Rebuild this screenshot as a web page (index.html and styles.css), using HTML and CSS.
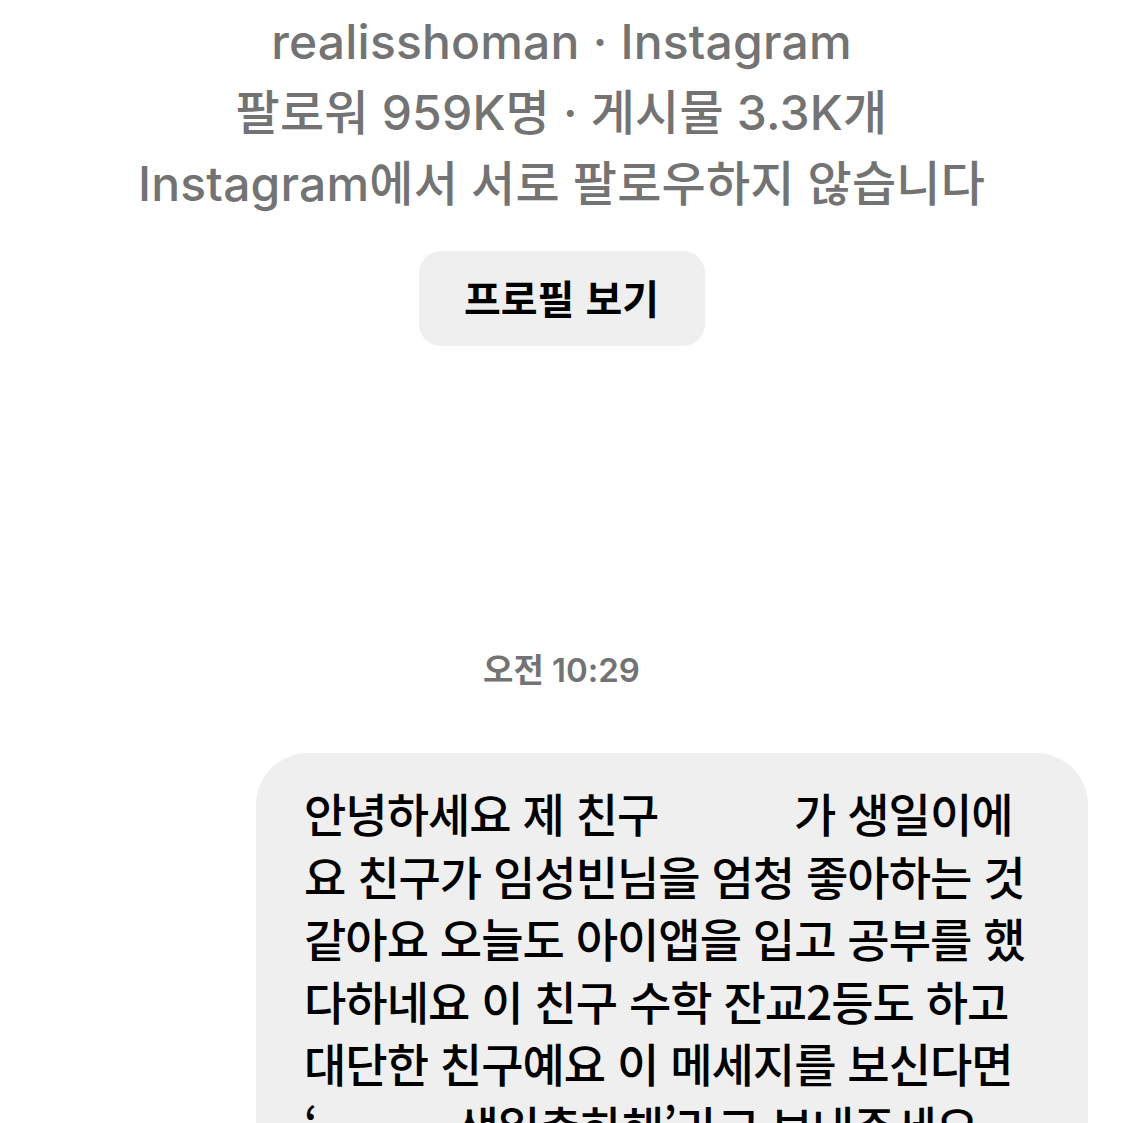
FILE: index.html
```html
<!DOCTYPE html>
<html lang="ko">
<head>
<meta charset="utf-8">
<title>Instagram DM</title>
<link rel="stylesheet" href="styles.css">
</head>
<body>
<main class="thread">
  <section class="profile">
    <p class="profile-line">realisshoman · Instagram</p>
    <p class="profile-line">팔로워 959K명 · 게시물 3.3K개</p>
    <p class="profile-line">Instagram에서 서로 팔로우하지 않습니다</p>
    <button class="profile-btn">프로필 보기</button>
  </section>
  <div class="timestamp">오전 10:29</div>
  <div class="msg-row">
    <div class="bubble">
      <p class="bubble-text">안녕하세요 제 친구 <span class="redact"></span> 가 생일이에<br>요 친구가 임성빈님을 엄청 좋아하는 것<br>같아요 오늘도 아이앱을 입고 공부를 했<br>다하네요 이 친구 수학 잔교2등도 하고<br>대단한 친구예요 이 메세지를 보신다면<br>‘<span class="redact short"></span>생일축하해’라고 보내주세요</p>
    </div>
  </div>
</main>
</body>
</html>
```
FILE: styles.css
```css
html, body {
  margin: 0;
  padding: 0;
  background: #ffffff;
  height: 100%;
  overflow: hidden;
}
body {
  font-family: "Inter", "Noto Sans CJK KR", sans-serif;
}
.thread {
  width: 1123px;
  display: flex;
  flex-direction: column;
  align-items: center;
}
.profile {
  display: flex;
  flex-direction: column;
  align-items: center;
  padding-top: 6px;
}
.profile-line {
  margin: 0;
  font-size: 48px;
  line-height: 71px;
  font-weight: 500;
  color: #737373;
  letter-spacing: 0.2px;
  white-space: nowrap;
}
.profile-btn {
  margin-top: 32px;
  width: 286px;
  height: 95px;
  border: none;
  border-radius: 22px;
  background: #efefef;
  font-family: "Noto Sans CJK KR", sans-serif;
  font-size: 40px;
  font-weight: 700;
  color: #000;
  padding: 0 0 3px 0;
}
.timestamp {
  margin-top: 303px;
  font-size: 33px;
  font-weight: 600;
  color: #737373;
  line-height: 42px;
}
.msg-row {
  align-self: stretch;
  display: flex;
  justify-content: flex-end;
  padding-right: 35px;
  margin-top: 62px;
}
.bubble {
  width: 832px;
  background: #efefef;
  border-radius: 52px;
  padding: 28px 30px 40px 48px;
  box-sizing: border-box;
}
.bubble-text {
  margin: 0;
  font-family: "Noto Sans CJK KR", sans-serif;
  font-size: 46px;
  line-height: 62.5px;
  font-weight: 500;
  color: #000;
  white-space: nowrap;
  letter-spacing: -1px;
}
.redact {
  display: inline-block;
  width: 112px;
}
.redact.short {
  width: 140px;
}
```
